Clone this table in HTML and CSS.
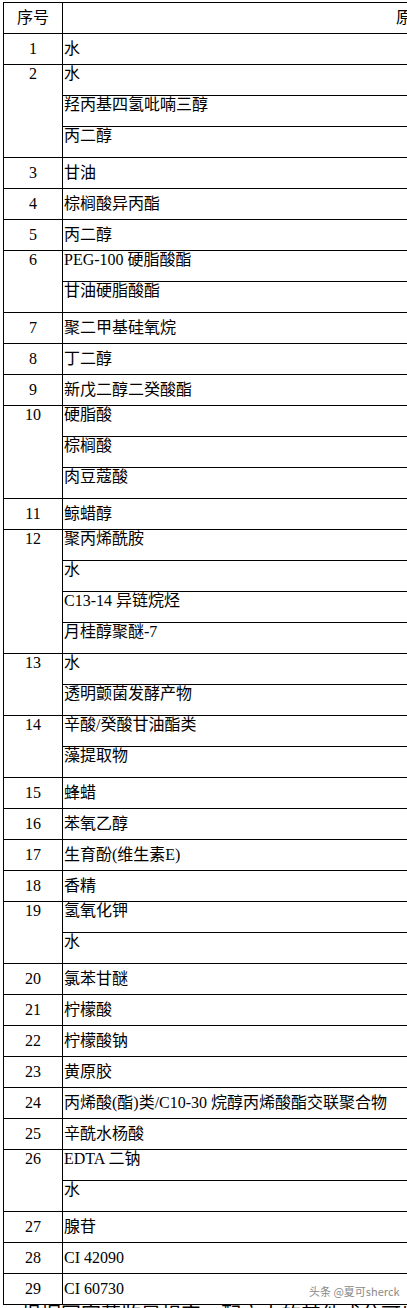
FILE: index.html
```html
<!DOCTYPE html>
<html lang="zh-CN">
<head>
<meta charset="utf-8">
<title>配方表</title>
<link rel="stylesheet" href="styles.css">
</head>
<body>
<div class="sheet">
  <div class="tbl">
    <div class="row head"><div class="num">序号</div><div class="name head-name">原料名称</div></div>
    <div class="row"><div class="num">1</div><div class="name">水</div></div>
    <div class="row multi"><div class="num">2</div><div class="items"><div class="item">水</div><div class="item">羟丙基四氢吡喃三醇</div><div class="item">丙二醇</div></div></div>
    <div class="row"><div class="num">3</div><div class="name">甘油</div></div>
    <div class="row"><div class="num">4</div><div class="name">棕榈酸异丙酯</div></div>
    <div class="row"><div class="num">5</div><div class="name">丙二醇</div></div>
    <div class="row multi"><div class="num">6</div><div class="items"><div class="item">PEG-100 硬脂酸酯</div><div class="item">甘油硬脂酸酯</div></div></div>
    <div class="row"><div class="num">7</div><div class="name">聚二甲基硅氧烷</div></div>
    <div class="row"><div class="num">8</div><div class="name">丁二醇</div></div>
    <div class="row"><div class="num">9</div><div class="name">新戊二醇二癸酸酯</div></div>
    <div class="row multi"><div class="num">10</div><div class="items"><div class="item">硬脂酸</div><div class="item">棕榈酸</div><div class="item">肉豆蔻酸</div></div></div>
    <div class="row"><div class="num">11</div><div class="name">鲸蜡醇</div></div>
    <div class="row multi"><div class="num">12</div><div class="items"><div class="item">聚丙烯酰胺</div><div class="item">水</div><div class="item">C13-14 异链烷烃</div><div class="item">月桂醇聚醚-7</div></div></div>
    <div class="row multi"><div class="num">13</div><div class="items"><div class="item">水</div><div class="item">透明颤菌发酵产物</div></div></div>
    <div class="row multi"><div class="num">14</div><div class="items"><div class="item">辛酸/癸酸甘油酯类</div><div class="item">藻提取物</div></div></div>
    <div class="row"><div class="num">15</div><div class="name">蜂蜡</div></div>
    <div class="row"><div class="num">16</div><div class="name">苯氧乙醇</div></div>
    <div class="row"><div class="num">17</div><div class="name">生育酚(维生素E)</div></div>
    <div class="row"><div class="num">18</div><div class="name">香精</div></div>
    <div class="row multi"><div class="num">19</div><div class="items"><div class="item">氢氧化钾</div><div class="item">水</div></div></div>
    <div class="row"><div class="num">20</div><div class="name">氯苯甘醚</div></div>
    <div class="row"><div class="num">21</div><div class="name">柠檬酸</div></div>
    <div class="row"><div class="num">22</div><div class="name">柠檬酸钠</div></div>
    <div class="row"><div class="num">23</div><div class="name">黄原胶</div></div>
    <div class="row"><div class="num">24</div><div class="name">丙烯酸(酯)类/C10-30 烷醇丙烯酸酯交联聚合物</div></div>
    <div class="row"><div class="num">25</div><div class="name">辛酰水杨酸</div></div>
    <div class="row multi"><div class="num">26</div><div class="items"><div class="item">EDTA 二钠</div><div class="item">水</div></div></div>
    <div class="row"><div class="num">27</div><div class="name">腺苷</div></div>
    <div class="row"><div class="num">28</div><div class="name">CI 42090</div></div>
    <div class="row"><div class="num">29</div><div class="name">CI 60730</div></div>
  </div>
  <p class="note">根据国家药监局规定，配方中的其他成分可以不列入标签</p>
  <div class="wm">头条 @夏可sherck</div>
</div>
</body>
</html>
```
FILE: styles.css
```css
html, body {
  margin: 0;
  padding: 0;
  background: #fff;
  overflow: hidden;
}
body {
  width: 407px;
  height: 1308px;
  font-family: "Liberation Serif", "Noto Sans CJK SC", serif;
  font-size: 16px;
  color: #000;
}
.sheet {
  position: relative;
  padding: 2px 0 0 3px;
  height: 1306px;
}
.tbl {
  width: 800px;
  border-top: 1px solid #000;
  border-left: 1px solid #000;
}
.row {
  display: flex;
  border-bottom: 1px solid #000;
}
.num {
  width: 58px;
  flex: none;
  border-right: 1px solid #000;
  text-align: center;
  line-height: 30px;
  height: 30px;
}
.name {
  flex: 1;
  padding-left: 1px;
  line-height: 30px;
  height: 30px;
  white-space: nowrap;
}
.head-name {
  padding-left: 333px;
}
.multi .num {
  height: auto;
  line-height: 18px;
}
.items {
  flex: 1;
}
.item {
  height: 30px;
  line-height: 18px;
  padding-left: 1px;
  white-space: nowrap;
}
.item + .item {
  border-top: 1px solid #000;
}
.note {
  margin: -3px 0 0 0;
  padding-left: 18px;
  font-family: "Noto Sans CJK SC", sans-serif;
  font-size: 20px;
  line-height: 24px;
  white-space: nowrap;
}
.wm {
  position: absolute;
  left: 309px;
  top: 1284px;
  font-family: "Noto Sans CJK SC", sans-serif;
  font-size: 11px;
  line-height: 14px;
  color: #8a8a8a;
  text-shadow: 0 0 2px #fff;
  white-space: nowrap;
}
```
